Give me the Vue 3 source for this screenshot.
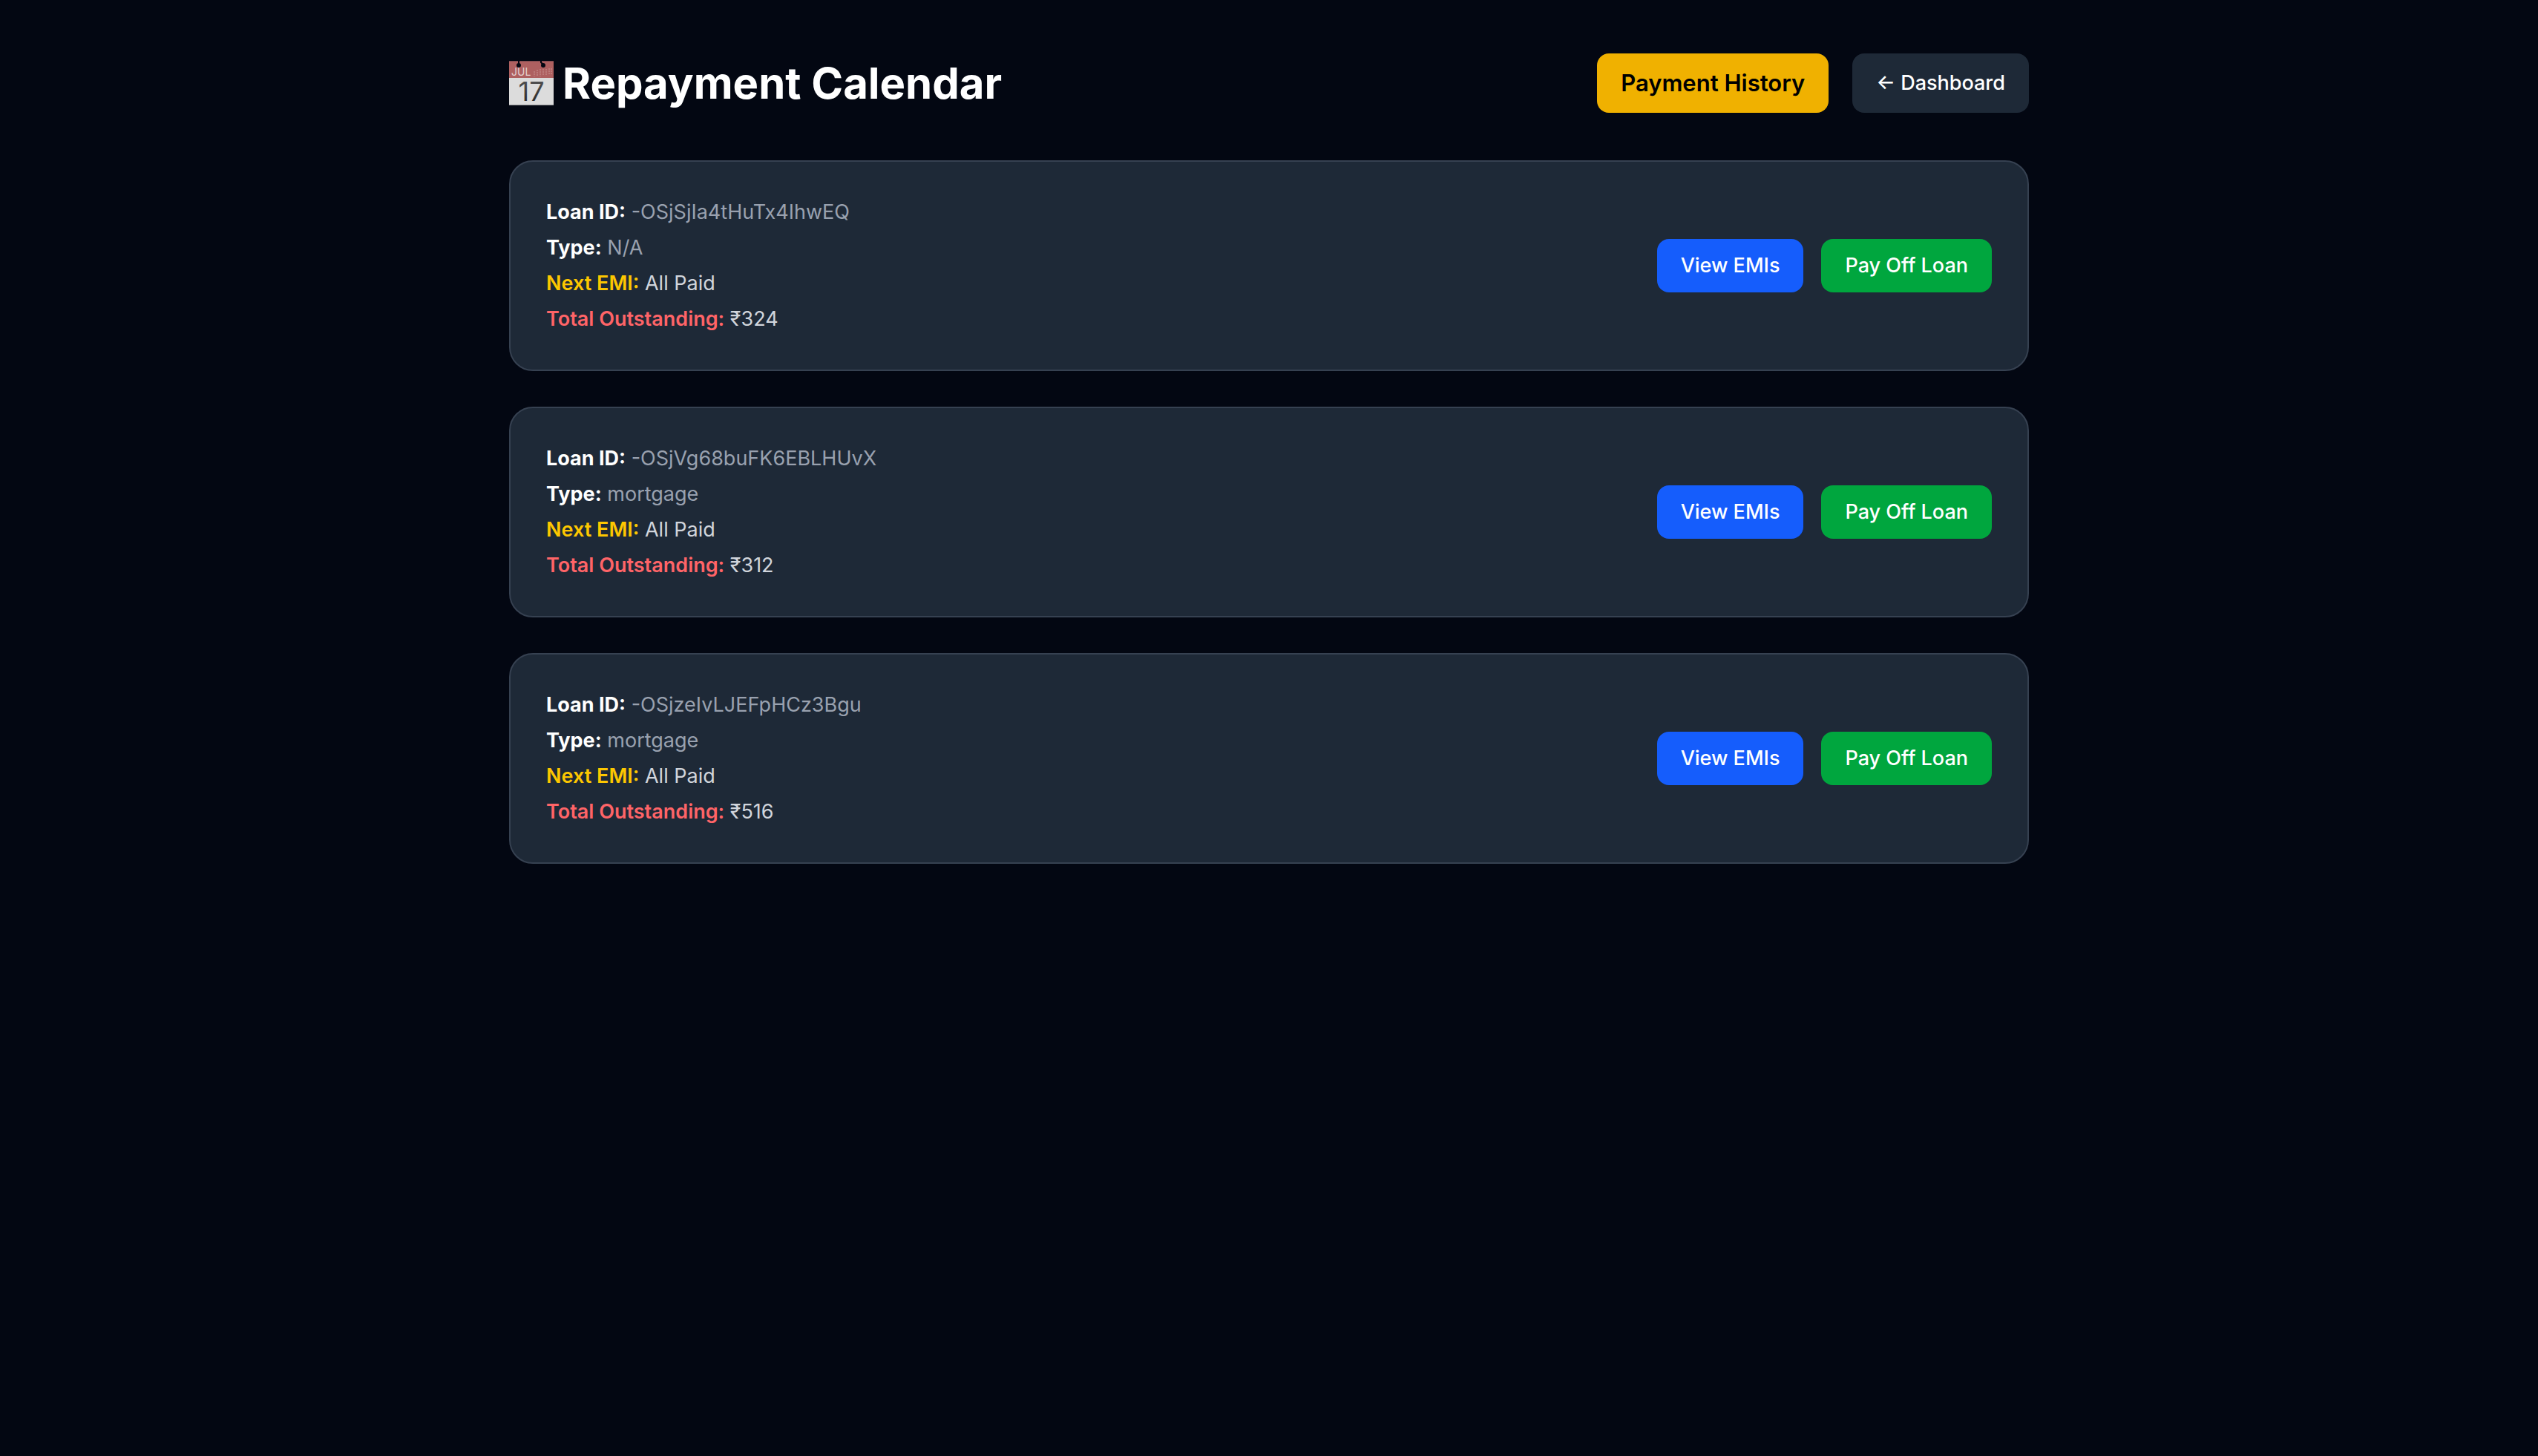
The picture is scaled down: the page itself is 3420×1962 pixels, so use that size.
<script setup>
const loans = [
  { id: '-OSjSjIa4tHuTx4IhwEQ', type: 'N/A', nextEmi: 'All Paid', outstanding: 324 },
  { id: '-OSjVg68buFK6EBLHUvX', type: 'mortgage', nextEmi: 'All Paid', outstanding: 312 },
  { id: '-OSjzeIvLJEFpHCz3Bgu', type: 'mortgage', nextEmi: 'All Paid', outstanding: 516 },
]
</script>

<template>
  <div class="page">
    <main class="container">
      <header class="header">
        <h1 class="title">
          <svg class="calendar" viewBox="0 0 60 60" aria-hidden="true">
            <defs>
              <linearGradient id="digits" x1="0" y1="0" x2="0" y2="1">
                <stop offset="0" stop-color="#5a5a5a" />
                <stop offset="1" stop-color="#222" />
              </linearGradient>
            </defs>
            <rect width="60" height="60" fill="#dcdcdc" />
            <rect width="60" height="23" fill="#ae6060" />
            <rect width="60" height="1" fill="#7c4a4e" />
            <rect y="59" width="60" height="1" fill="#8f9193" />
            <path d="M13 0v5M43 0v2l3 3" stroke="#030712" stroke-width="2" fill="none" />
            <circle cx="13" cy="6" r="3" fill="#030712" />
            <circle cx="46" cy="6" r="3" fill="#030712" />
            <path
              d="M34 14v7M38 12v9M42 11v10M46 11v9M50 11v9M54 10v9M57 10v8"
              stroke="#c99594"
              stroke-width="1"
              stroke-dasharray="2 1"
            />
            <text class="month" x="3" y="20">JUL</text>
            <text class="day" x="30" y="54" text-anchor="middle" fill="url(#digits)">17</text>
          </svg>
          <span>Repayment Calendar</span>
        </h1>
        <nav class="nav">
          <button type="button" class="btn history">Payment History</button>
          <button type="button" class="btn dashboard">← Dashboard</button>
        </nav>
      </header>

      <section class="loans">
        <article v-for="loan in loans" :key="loan.id" class="card">
          <div class="details">
            <p><strong>Loan ID:</strong> <span class="muted">{{ loan.id }}</span></p>
            <p><strong>Type:</strong> <span class="muted">{{ loan.type }}</span></p>
            <p><span class="next">Next EMI:</span> {{ loan.nextEmi }}</p>
            <p><span class="due">Total Outstanding:</span> ₹{{ loan.outstanding }}</p>
          </div>
          <div class="actions">
            <button type="button" class="btn view">View EMIs</button>
            <button type="button" class="btn pay">Pay Off Loan</button>
          </div>
        </article>
      </section>
    </main>
  </div>
</template>

<style>
body {
  background: #030712;
}
</style>

<style scoped>
.page {
  min-height: 100vh;
  box-sizing: border-box;
  padding: 72px 48px;
  background: #030712;
  color: #fff;
  font-family: Inter, "Liberation Sans", sans-serif;
  font-size: 27px;
  line-height: 40px;
}

.container {
  max-width: 2048px;
  margin: 0 auto;
}

.header {
  display: flex;
  align-items: center;
  justify-content: space-between;
  margin-bottom: 64px;
}

.title {
  display: flex;
  align-items: center;
  gap: 12px;
  margin: 0;
  font-size: 58px;
  line-height: 72px;
  font-weight: 700;
}

.calendar {
  width: 60px;
  height: 60px;
  overflow: visible;
}

.month {
  font-size: 14px;
  font-weight: 400;
  fill: #e3cfcf;
}

.day {
  font-size: 36px;
  font-weight: 400;
}

.nav {
  display: flex;
  gap: 32px;
}

.btn {
  border: 0;
  border-radius: 16px;
  padding: 16px 32px;
  font: inherit;
  font-weight: 500;
  color: #fff;
  cursor: pointer;
}

.history {
  padding: 12px 32px;
  background: #f0b100;
  color: #000;
  font-size: 31px;
  line-height: 56px;
  font-weight: 600;
}

.dashboard {
  background: #1e2937;
}

.loans {
  display: flex;
  flex-direction: column;
  gap: 48px;
}

.card {
  display: flex;
  align-items: center;
  justify-content: space-between;
  padding: 48px;
  border: 2px solid #364151;
  border-radius: 32px;
  background: #1e2937;
  color: #d1d5dc;
}

.details {
  display: flex;
  flex-direction: column;
  gap: 8px;
}

.details p {
  margin: 0;
}

.details strong {
  color: #fff;
  font-weight: 700;
}

.muted {
  color: #99a1af;
}

.next {
  color: #fdc700;
  font-weight: 600;
}

.due {
  color: #ff6467;
  font-weight: 600;
}

.actions {
  display: flex;
  gap: 24px;
}

.view {
  background: #155dfc;
}

.pay {
  background: #00a63e;
}
</style>
